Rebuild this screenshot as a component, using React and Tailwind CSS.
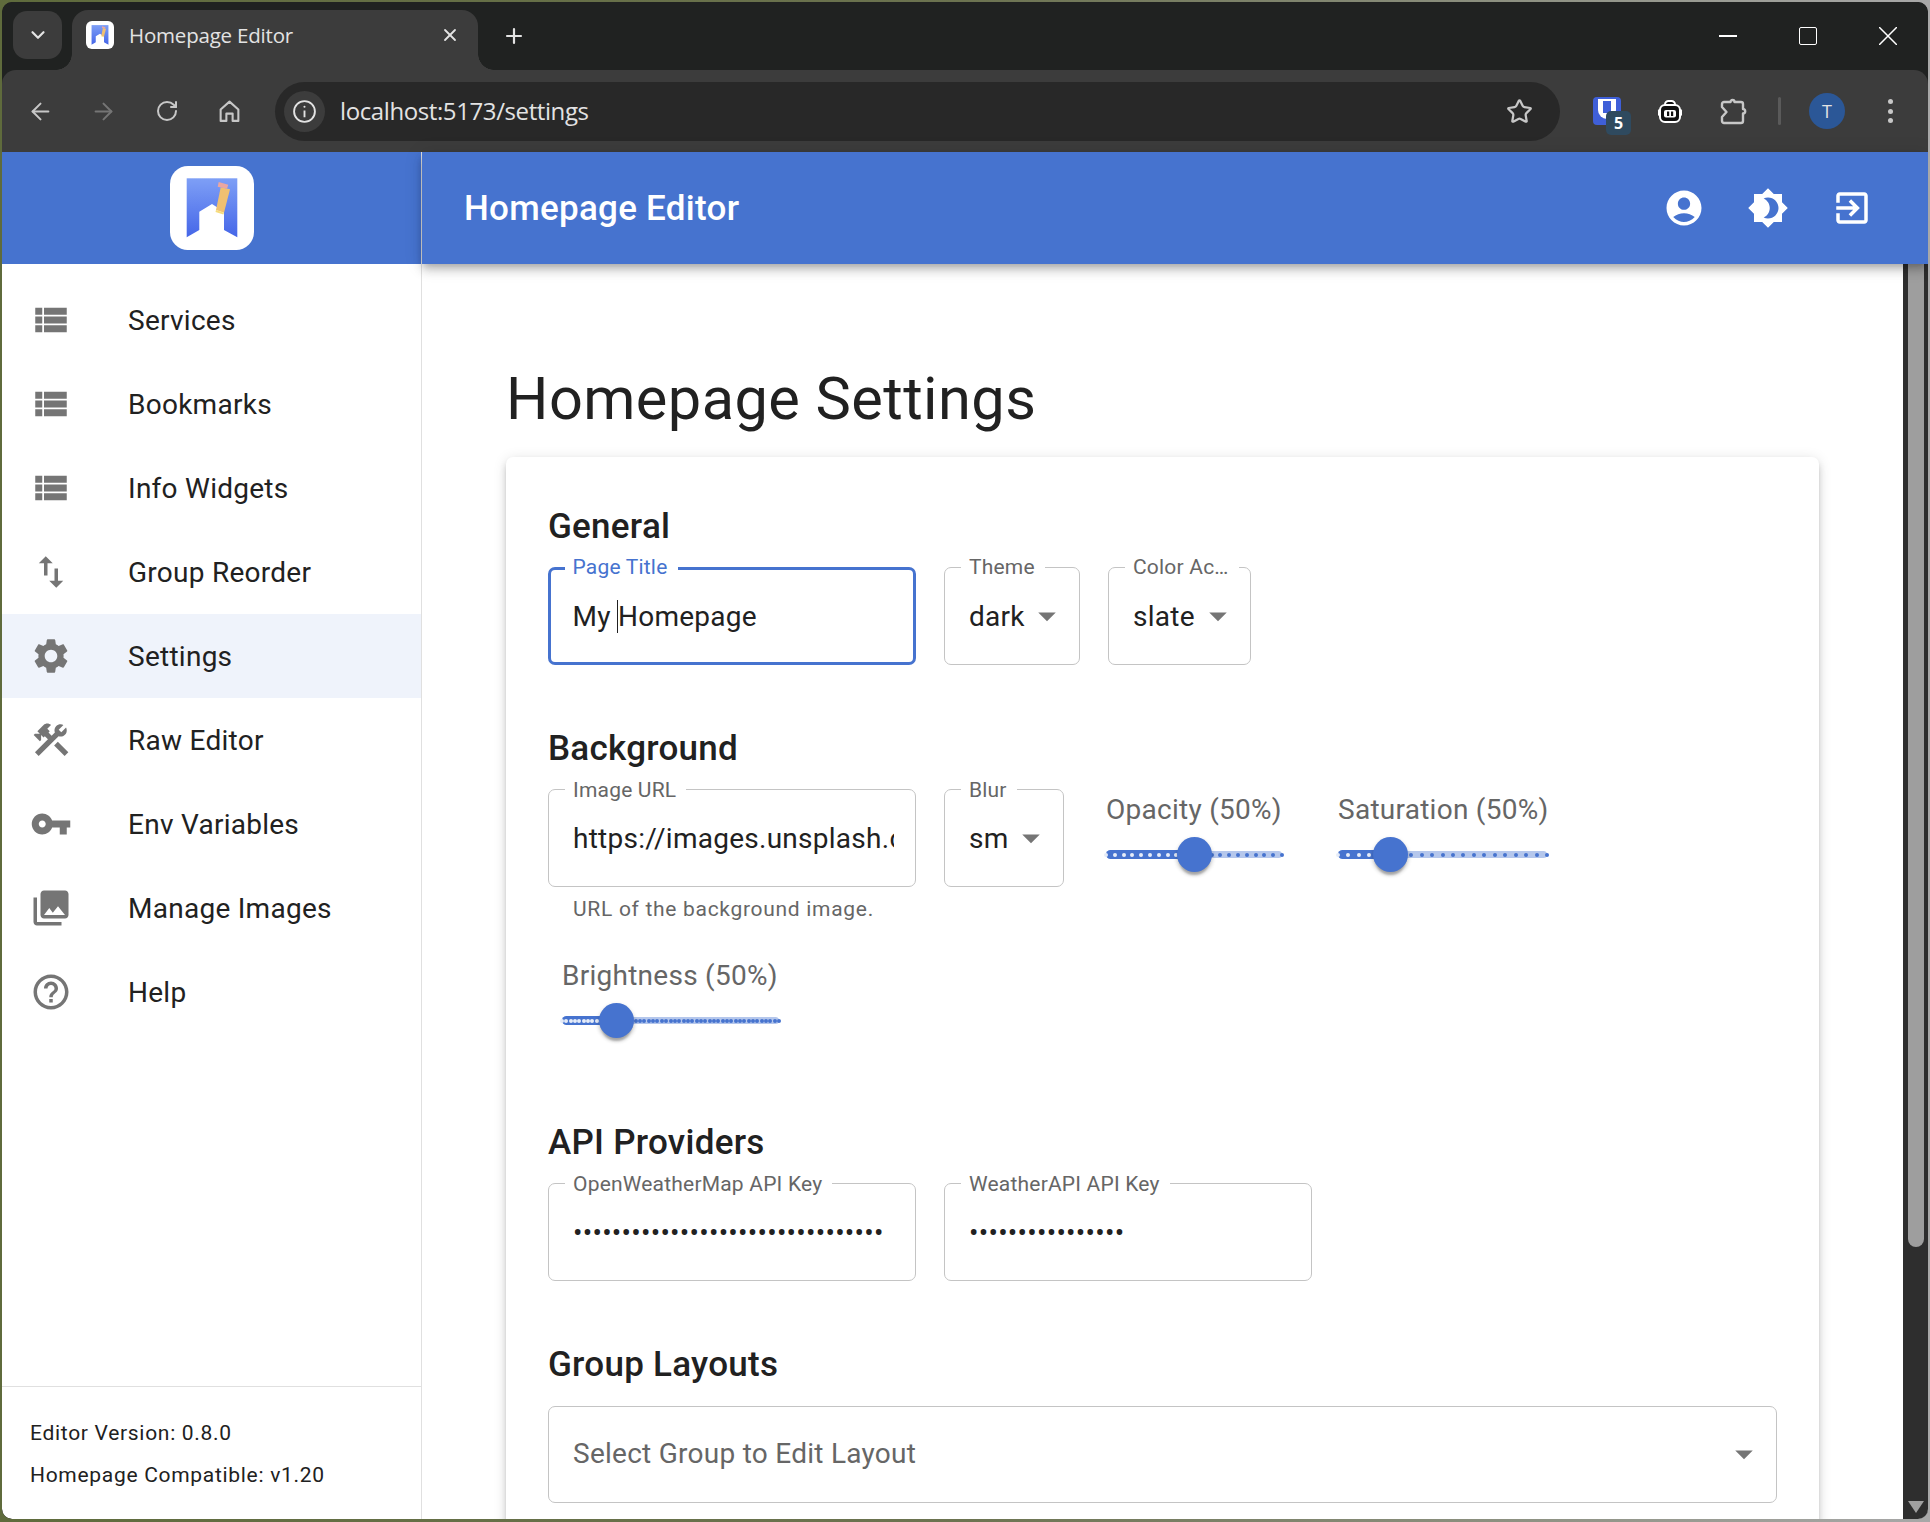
import React from 'react';
import { ArrowLeft, ArrowRight, RotateCw, Star, ChevronDown, X, Plus } from 'lucide-react';

const icons = {
	list: 'M3 14h4v-4H3v4zm0 5h4v-4H3v4zM3 9h4V5H3v4zm5 5h13v-4H8v4zm0 5h13v-4H8v4zM8 5v4h13V5H8z',
	swap: 'M16 17.01V10h-2v7.01h-3L15 21l4-3.99h-3zM9 3 5 6.99h3V14h2V6.99h3L9 3z',
	settings: 'M19.14 12.94c.04-.3.06-.61.06-.94 0-.32-.02-.64-.07-.94l2.03-1.58c.18-.14.23-.41.12-.61l-1.92-3.32c-.12-.22-.37-.29-.59-.22l-2.39.96c-.5-.38-1.03-.7-1.62-.94l-.36-2.54c-.04-.24-.24-.41-.48-.41h-3.84c-.24 0-.43.17-.47.41l-.36 2.54c-.59.24-1.13.57-1.62.94l-2.39-.96c-.22-.08-.47 0-.59.22L2.74 8.87c-.12.21-.08.47.12.61l2.03 1.58c-.05.3-.09.63-.09.94s.02.64.07.94l-2.03 1.58c-.18.14-.23.41-.12.61l1.92 3.32c.12.22.37.29.59.22l2.39-.96c.5.38 1.03.7 1.62.94l.36 2.54c.05.24.24.41.48.41h3.84c.24 0 .44-.17.47-.41l.36-2.54c.59-.24 1.13-.56 1.62-.94l2.39.96c.22.08.47 0 .59-.22l1.92-3.32c.12-.22.07-.47-.12-.61l-2.01-1.58zM12 15.6c-1.98 0-3.6-1.62-3.6-3.6s1.62-3.6 3.6-3.6 3.6 1.62 3.6 3.6-1.62 3.6-3.6 3.6z',
	tools: 'm13.7827 15.1719 2.1213-2.1213 5.9963 5.9962-2.1213 2.1213zM17.5 10c1.93 0 3.5-1.57 3.5-3.5 0-.58-.16-1.12-.41-1.6l-2.7 2.7-1.49-1.49 2.7-2.7c-.48-.25-1.02-.41-1.6-.41C15.57 3 14 4.57 14 6.5c0 .41.08.8.21 1.16l-1.85 1.85-1.78-1.78.71-.71-1.41-1.41L12 3.49c-1.17-1.17-3.07-1.17-4.24 0L4.22 7.03l1.41 1.41H2.81l-.71.71 3.54 3.54.71-.71V9.15l1.41 1.41.71-.71 1.78 1.78-7.41 7.41 2.12 2.12L16.34 9.79c.36.13.75.21 1.16.21z',
	key: 'M12.65 10C11.83 7.67 9.61 6 7 6c-3.31 0-6 2.69-6 6s2.69 6 6 6c2.61 0 4.83-1.67 5.65-4H17v4h4v-4h2v-4H12.65zM7 14c-1.1 0-2-.9-2-2s.9-2 2-2 2 .9 2 2-.9 2-2 2z',
	photos: 'M22 16V4c0-1.1-.9-2-2-2H8c-1.1 0-2 .9-2 2v12c0 1.1.9 2 2 2h12c1.1 0 2-.9 2-2zm-11-4 2.03 2.71L16 11l4 5H8l3-4zM2 6v14c0 1.1.9 2 2 2h14v-2H4V6H2z',
	help: 'M11 18h2v-2h-2v2zm1-16C6.48 2 2 6.48 2 12s4.48 10 10 10 10-4.48 10-10S17.52 2 12 2zm0 18c-4.41 0-8-3.59-8-8s3.59-8 8-8 8 3.59 8 8-3.59 8-8 8zm0-14c-2.21 0-4 1.79-4 4h2c0-1.1.9-2 2-2s2 .9 2 2c0 2-3 1.75-3 5h2c0-2.25 3-2.5 3-5 0-2.21-1.79-4-4-4z',
	account: 'M12 2C6.48 2 2 6.48 2 12s4.48 10 10 10 10-4.48 10-10S17.52 2 12 2zm0 4c1.93 0 3.5 1.57 3.5 3.5S13.93 13 12 13s-3.5-1.57-3.5-3.5S10.07 6 12 6zm0 14c-2.03 0-4.43-.82-6.14-2.88C7.55 15.8 9.68 15 12 15s4.45.8 6.14 2.12C16.43 19.18 14.03 20 12 20z',
	brightness: 'M20 8.69V4h-4.69L12 .69 8.69 4H4v4.69L.69 12 4 15.31V20h4.69L12 23.31 15.31 20H20v-4.69L23.31 12 20 8.69zM12 18c-.89 0-1.74-.2-2.5-.55C11.56 16.5 13 14.42 13 12s-1.44-4.5-3.5-5.45C10.26 6.2 11.11 6 12 6c3.31 0 6 2.69 6 6s-2.69 6-6 6z',
	exit: 'M10.09 15.59 11.5 17l5-5-5-5-1.41 1.41L12.67 11H3v2h9.67l-2.58 2.59zM19 3H5c-1.11 0-2 .9-2 2v4h2V5h14v14H5v-4H3v4c0 1.1.89 2 2 2h14c1.1 0 2-.9 2-2V5c0-1.1-.9-2-2-2z',
	drop: 'M7 10l5 5 5-5z',
};

const navItems = [
	{ label: 'Services', icon: 'list' },
	{ label: 'Bookmarks', icon: 'list' },
	{ label: 'Info Widgets', icon: 'list' },
	{ label: 'Group Reorder', icon: 'swap' },
	{ label: 'Settings', icon: 'settings', selected: true },
	{ label: 'Raw Editor', icon: 'tools' },
	{ label: 'Env Variables', icon: 'key' },
	{ label: 'Manage Images', icon: 'photos' },
	{ label: 'Help', icon: 'help' },
];

function MuiIcon({ name, className }) {
	return (
		<svg viewBox="0 0 24 24" fill="currentColor" className={className}>
			<path d={icons[name]} />
		</svg>
	);
}

function Logo({ id, className }) {
	return (
		<svg viewBox="0 0 84 84" className={className}>
			<defs>
				<linearGradient id={id} x1="0" y1="0" x2="0" y2="1">
					<stop offset="0" stopColor="#7e9ff6" />
					<stop offset="1" stopColor="#4566e8" />
				</linearGradient>
			</defs>
			<rect width="84" height="84" rx="18" fill="#fff" />
			<rect x="16.7" y="12.3" width="50.6" height="59" fill={`url(#${id})`} />
			<polygon points="16.7,71.3 29.3,64 29.3,45.7 42,38 54,45.7 54,64 67.3,71.3 67.3,84 16.7,84" fill="#fff" />
			<polygon points="50.7,21.3 60,23.3 54,46.7 46,44" fill="#f0c071" />
			<polygon points="48.7,16 58.3,18.7 57,22.7 47.7,20.7" fill="#eba6a0" />
			<polygon points="46,44 54,46.7 53.4,48.5 45.5,46" fill="#f6dc7c" />
		</svg>
	);
}

function OutlinedField({ label, focused, widthClass, children }) {
	return (
		<fieldset
			className={`${widthClass} h-[98px] min-w-0 shrink-0 flex items-center rounded-[7px] ${
				focused ? 'border-[3.5px] border-[#4673cf] pl-[13.5px]' : 'border border-[#c4c4c4] pl-4'
			}`}
		>
			<legend
				className={`h-0 pl-2 pr-[10px] text-[21px] leading-[0px] tracking-[.197px] whitespace-nowrap ${
					focused ? 'relative -top-px text-[#4673cf]' : 'text-[#666666]'
				}`}
			>
				{label}
			</legend>
			{children}
		</fieldset>
	);
}

function TextField({ label, value, type = 'text', widthClass = 'w-[368px]' }) {
	return (
		<OutlinedField label={label} widthClass={widthClass}>
			<input
				readOnly
				type={type}
				value={value}
				className="ml-2 mr-[21px] pt-[2px] w-full min-w-0 bg-transparent outline-none text-[28px] tracking-[.2625px] text-[#212121]"
			/>
		</OutlinedField>
	);
}

function SelectField({ label, value, widthClass }) {
	return (
		<OutlinedField label={label} widthClass={widthClass}>
			<span className="ml-2 pt-[2px] text-[28px] tracking-[.2625px] text-[#212121]">{value}</span>
			<MuiIcon name="drop" className="ml-auto mr-[11px] w-[42px] h-[42px] text-[#757575]" />
		</OutlinedField>
	);
}

function SliderField({ label, pct, steps, widthClass }) {
	const dots = Array.from({ length: steps + 1 }, (_, i) => i);
	return (
		<div className={`${widthClass} mx-[14px] h-[104px] shrink-0`}>
			<div className="text-[28px] leading-[42px] tracking-[.2625px] text-[#666666] whitespace-nowrap">{label}</div>
			<div className="relative h-[49px]">
				<div className="absolute left-0 right-0 top-[20px] h-[7px] rounded-full bg-[#b5c7ec]" />
				<div className="absolute left-0 top-[19px] h-[9px] rounded-l-full bg-[#4673cf]" style={{ width: `${pct}%` }} />
				{dots.map((i) => (
					<span
						key={i}
						className={`absolute top-[21.5px] w-1 h-1 -ml-[2px] rounded-full ${(i / steps) * 100 < pct ? 'bg-[#e6ecf8]' : 'bg-[#4673cf]'}`}
						style={{ left: `${(i / steps) * 100}%` }}
					/>
				))}
				<div
					className="absolute top-[6px] w-[35px] h-[35px] -ml-[17.5px] rounded-full bg-[#4673cf] shadow-[0_5px_2px_-2px_rgba(0,0,0,0.2),0_3px_4px_0_rgba(0,0,0,0.14),0_2px_5px_0_rgba(0,0,0,0.12)]"
					style={{ left: `${pct}%` }}
				/>
			</div>
		</div>
	);
}

function SectionTitle({ children }) {
	return <h6 className="text-[35px] font-medium leading-[56px] tracking-[.2625px] text-[#212121] mb-[12.25px]">{children}</h6>;
}

function TabStrip() {
	return (
		<div className="h-[68px] shrink-0 flex bg-[#202221] rounded-t-[10px]">
			<div className="ml-[11px] mt-[9px] w-[49px] h-[48px] rounded-[14px] bg-[#3c3c3c] flex items-center justify-center text-[#e3e3e3]">
				<ChevronDown size={22} strokeWidth={2.4} />
			</div>
			<div className="relative ml-[10px] mt-[8px] w-[406px] h-[60px] rounded-t-[16px] bg-[#3c3c3c] flex items-center pb-[10px] pl-[14px]">
				<span className="absolute left-[-16px] bottom-0 w-4 h-4 bg-[radial-gradient(circle_at_0_0,transparent_15.5px,#3c3c3c_16px)]" />
				<span className="absolute right-[-16px] bottom-0 w-4 h-4 bg-[radial-gradient(circle_at_100%_0,transparent_15.5px,#3c3c3c_16px)]" />
				<Logo id="tabLogo" className="w-7 h-7" />
				<span className="ml-[15px] font-['Open_Sans',sans-serif] text-[20.5px] tracking-[-.2px] text-[#e3e3e3] whitespace-nowrap">Homepage Editor</span>
				<X size={20} strokeWidth={2.2} className="ml-auto mr-[18px] text-[#e3e3e3]" />
			</div>
			<div className="ml-[24px] flex items-center text-[#e3e3e3]">
				<Plus size={24} strokeWidth={2.2} />
			</div>
			<div className="ml-auto flex text-white">
				<div className="w-20 flex items-center justify-center"><div className="w-[18px] h-[1.5px] bg-white" /></div>
				<div className="w-20 flex items-center justify-center"><div className="w-[18px] h-[18px] rounded-[2px] border-[1.5px] border-white" /></div>
				<div className="w-20 flex items-center justify-center">
					<svg viewBox="0 0 18 18" className="w-[18px] h-[18px]" stroke="currentColor" strokeWidth="1.5"><path d="M0 0l18 18M18 0L0 18" /></svg>
				</div>
			</div>
		</div>
	);
}

function ToolCell({ children }) {
	return <div className="w-[63px] shrink-0 flex items-center justify-center">{children}</div>;
}

function Toolbar() {
	return (
		<div className="h-[82px] shrink-0 flex items-center pl-[7px] bg-[#3c3c3c] rounded-t-[14px]">
			<ToolCell><ArrowLeft size={27} strokeWidth={1.8} className="text-[#c7c7c7]" /></ToolCell>
			<ToolCell><ArrowRight size={27} strokeWidth={1.8} className="text-[#757575]" /></ToolCell>
			<ToolCell><RotateCw size={24} strokeWidth={2} className="text-[#c7c7c7]" /></ToolCell>
			<ToolCell>
				<svg viewBox="0 0 24 24" fill="none" stroke="#c7c7c7" strokeWidth="2" className="w-[25px] h-[25px]">
					<path d="M3.5 21V10L12 2.5 20.5 10v11h-5.5v-7H9v7z" strokeLinejoin="round" />
				</svg>
			</ToolCell>
			<div className="ml-[14px] w-[1285px] h-[59px] rounded-full bg-[#282828] flex items-center pl-[9px] pr-[27px]">
				<div className="w-[41px] h-[41px] rounded-full bg-[#3c3c3c] flex items-center justify-center">
					<svg viewBox="0 0 24 24" fill="none" stroke="#e3e3e3" strokeWidth="1.8" className="w-[25px] h-[25px]">
						<circle cx="12" cy="12" r="10" />
						<path d="M12 11v6.5" />
						<circle cx="12" cy="7.5" r="1" fill="#e3e3e3" stroke="none" />
					</svg>
				</div>
				<span className="ml-[15px] font-['Open_Sans',sans-serif] text-[24px] tracking-[-.4px] text-[#e3e3e3]">localhost:5173/settings</span>
				<Star size={27} strokeWidth={2} className="ml-auto text-[#c7c7c7]" />
			</div>
			<div className="ml-[15.5px] flex">
				<ToolCell>
					<div className="relative w-[28px] h-[28px] rounded-[4px] bg-[#3f5fd8] flex items-start justify-center pt-[2px]">
						<div className="w-[18px] h-[20px] bg-white rounded-b-[9px] flex justify-center">
							<div className="w-[8px] h-[12px] mt-[2px] bg-[#3f5fd8]" />
						</div>
						<span className="absolute left-[13px] top-[14px] w-[25px] h-[24px] rounded-[5px] bg-[#2f4a5f] flex items-center justify-center font-['Open_Sans',sans-serif] text-[16px] font-bold text-white">5</span>
					</div>
				</ToolCell>
				<ToolCell>
					<svg viewBox="0 0 26 23" className="w-[26px] h-[23px]">
						<rect x="8" y="1" width="10" height="8" rx="3.5" fill="#111" stroke="#fff" strokeWidth="2" />
						<rect x="1" y="9" width="3" height="7" rx="1.5" fill="#fff" />
						<rect x="22" y="9" width="3" height="7" rx="1.5" fill="#fff" />
						<rect x="3" y="5" width="20" height="17" rx="5" fill="#111" stroke="#fff" strokeWidth="2" />
						<rect x="7" y="10" width="12" height="7.5" rx="2" fill="#fff" />
						<rect x="10" y="11.5" width="2.2" height="4.5" fill="#111" />
						<rect x="14" y="11.5" width="2.2" height="4.5" fill="#111" />
					</svg>
				</ToolCell>
				<ToolCell>
					<svg viewBox="0 0 28 28" fill="none" stroke="#c7c7c7" strokeWidth="2.4" strokeLinejoin="round" className="w-[28px] h-[28px]">
						<path d="M5 5h6.5a2 2 0 0 1 4 0H22a2 2 0 0 1 2 2v5a2.2 2.2 0 0 1 0 4.4V24a2 2 0 0 1-2 2H5a2 2 0 0 1-2-2v-4l4.5-5L3 10V7a2 2 0 0 1 2-2z" />
					</svg>
				</ToolCell>
			</div>
			<div className="ml-[13px] mr-[15px] w-[3px] h-[28px] rounded-full bg-[#5a5a5a]" />
			<ToolCell>
				<div className="w-9 h-9 rounded-full bg-[#2b5797] flex items-center justify-center font-['Open_Sans',sans-serif] text-[18px] text-[#e3e3e3]">T</div>
			</ToolCell>
			<ToolCell>
				<div className="flex flex-col gap-[4.5px]">
					<span className="w-[5px] h-[5px] rounded-full bg-[#c7c7c7]" />
					<span className="w-[5px] h-[5px] rounded-full bg-[#c7c7c7]" />
					<span className="w-[5px] h-[5px] rounded-full bg-[#c7c7c7]" />
				</div>
			</ToolCell>
		</div>
	);
}

function Sidebar() {
	return (
		<aside className="w-[420px] shrink-0 flex flex-col bg-white border-r border-[#e0e0e0] rounded-bl-[10px]">
			<div className="h-[112px] shrink-0 bg-[#4673cf] flex items-center justify-center">
				<Logo id="appLogo" className="w-[84px] h-[84px]" />
			</div>
			<nav className="pt-[14px] flex-1">
				{navItems.map((item) => (
					<div key={item.label} className={`h-[84px] flex items-center pl-7 ${item.selected ? 'bg-[#eff3fb]' : ''}`}>
						<MuiIcon name={item.icon} className="w-[42px] h-[42px] text-[#757575]" />
						<span className="ml-[56px] pt-[2px] text-[28px] tracking-[.2625px] text-[#212121]">{item.label}</span>
					</div>
				))}
			</nav>
			<div className="h-[133px] shrink-0 border-t border-[#e0e0e0] pl-7 pt-[25px] text-[21px] leading-[42px] tracking-[.7px] text-[#212121]">
				<div>Editor Version: 0.8.0</div>
				<div>Homepage Compatible: v1.20</div>
			</div>
		</aside>
	);
}

function AppBar() {
	return (
		<header className="relative z-10 h-[112px] shrink-0 bg-[#4673cf] flex items-center pl-[42px] pr-[55px] text-white shadow-[0_3.5px_7px_-2px_rgba(0,0,0,0.2),0_7px_9px_0_rgba(0,0,0,0.14),0_2px_18px_0_rgba(0,0,0,0.12)]">
			<h6 className="pt-[2px] text-[35px] font-medium tracking-[.2625px]">Homepage Editor</h6>
			<div className="ml-auto flex gap-[42px]">
				<MuiIcon name="account" className="w-[42px] h-[42px]" />
				<MuiIcon name="brightness" className="w-[42px] h-[42px]" />
				<MuiIcon name="exit" className="w-[42px] h-[42px]" />
			</div>
		</header>
	);
}

function SettingsCard() {
	return (
		<div className="bg-white rounded-[7px] p-[42px] pb-[200px] shadow-[0_5px_5px_-3.5px_rgba(0,0,0,0.2),0_5px_7px_0_rgba(0,0,0,0.14),0_2px_14px_0_rgba(0,0,0,0.12)]">
			<section className="mb-14">
				<SectionTitle>General</SectionTitle>
				<div className="flex gap-7">
					<OutlinedField label="Page Title" focused widthClass="w-[368px]">
						<div className="ml-2 pt-[2px] flex items-center text-[28px] tracking-[.2625px] text-[#212121] whitespace-pre">
							My <span className="w-px h-[33px] -ml-px bg-[#212121]" />Homepage
						</div>
					</OutlinedField>
					<SelectField label="Theme" value="dark" widthClass="w-[136px]" />
					<SelectField label="Color Ac…" value="slate" widthClass="w-[143px]" />
				</div>
			</section>

			<section className="mb-14">
				<SectionTitle>Background</SectionTitle>
				<div className="flex flex-wrap gap-x-7 gap-y-7">
					<div>
						<TextField label="Image URL" value="https://images.unsplash.com/photo-1506744038136" />
						<p className="mt-[5px] ml-[25px] text-[21px] leading-[35px] tracking-[.7px] text-[#666666]">URL of the background image.</p>
					</div>
					<SelectField label="Blur" value="sm" widthClass="w-[120px]" />
					<SliderField label="Opacity (50%)" pct={50} steps={20} widthClass="w-[176px]" />
					<SliderField label="Saturation (50%)" pct={25} steps={20} widthClass="w-[209px]" />
					<SliderField label="Brightness (50%)" pct={25} steps={50} widthClass="w-[217px]" />
				</div>
			</section>

			<section className="mb-14">
				<SectionTitle>API Providers</SectionTitle>
				<div className="flex gap-7">
					<TextField label="OpenWeatherMap API Key" type="password" value="12345678901234567890123456789012" />
					<TextField label="WeatherAPI API Key" type="password" value="1234567890123456" />
				</div>
			</section>

			<section>
				<SectionTitle>Group Layouts</SectionTitle>
				<div className="h-[97px] flex items-center rounded-[7px] border border-[#c4c4c4] pl-6 pr-[11px]">
					<span className="text-[28px] tracking-[.2625px] text-[#666666]">Select Group to Edit Layout</span>
					<MuiIcon name="drop" className="ml-auto w-[42px] h-[42px] text-[#757575]" />
				</div>
			</section>
		</div>
	);
}

export default function App() {
	return (
		<div className="w-[1930px] h-[1522px] overflow-hidden pl-[2px] pr-[2px] pt-[2px] pb-[3px] bg-gradient-to-r from-[#5f6b3c] via-[#6c7350] to-[#a8a8a8] font-['Roboto',sans-serif]">
			<div className="h-full flex flex-col bg-[#202221] rounded-t-[10px] rounded-b-[10px] overflow-hidden">
				<TabStrip />
				<Toolbar />
				<div className="flex-1 min-h-0 flex">
					<Sidebar />
					<div className="flex-1 min-w-0 flex flex-col bg-white">
						<AppBar />
						<div className="flex-1 min-h-0 flex">
							<main className="w-[1481px] shrink-0 overflow-hidden px-[84px] pt-[99px]">
								<h4 className="text-[59.5px] leading-[73.5px] tracking-[.437px] text-[#212121] mb-[20px]">Homepage Settings</h4>
								<SettingsCard />
							</main>
							<div className="flex-1 flex flex-col items-center bg-[#2e2e2e] pb-[6px]">
								<div className="w-[16px] h-[983px] rounded-b-full bg-[#9e9e9e]" />
								<svg viewBox="0 0 16 12" className="mt-auto w-[16px] h-[12px]"><path d="M0 0h16L8 12z" fill="#a0a0a0" /></svg>
							</div>
						</div>
					</div>
				</div>
			</div>
		</div>
	);
}
